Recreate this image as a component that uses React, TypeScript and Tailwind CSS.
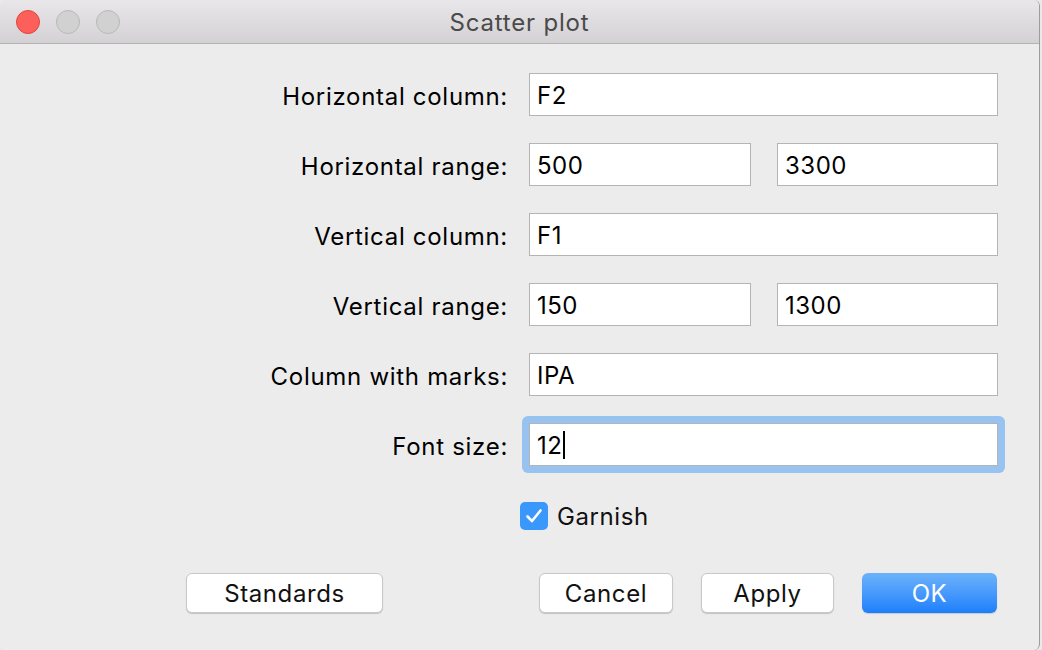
const FONT = { fontFamily: 'Inter, "Liberation Sans", sans-serif' };

function Field({ value, caret }: { value: string; caret?: boolean }) {
  return (
    <div className="flex h-[43px] w-full items-center border border-[#b4b4b4] bg-white pl-[7px] pt-[3px] text-[24px] tracking-[0.5px] text-black">
      {value}
      {caret && <span className="ml-[1px] -mt-[3px] inline-block h-[28px] w-[2px] bg-black" />}
    </div>
  );
}

function Label({ text }: { text: string }) {
  return (
    <div className="flex h-[43px] items-center justify-end pt-[4px] text-[24px] tracking-[0.7px] text-black">
      {text}
    </div>
  );
}

function Btn({ text, w, primary }: { text: string; w: string; primary?: boolean }) {
  if (primary) {
    return (
      <button
        className={`${w} flex h-[40px] items-center justify-center rounded-[6px] bg-gradient-to-b from-[#6cb2fb] to-[#1a7ffb] pt-[2px] text-[24px] tracking-[0.6px] text-white shadow-[0_1px_1px_rgba(0,0,0,0.15)]`}
      >
        {text}
      </button>
    );
  }
  return (
    <button
      className={`${w} flex h-[40px] items-center justify-center rounded-[6px] border border-[#c8c8c8] bg-white pt-[2px] text-[24px] tracking-[0.6px] text-[#111] shadow-[0_1px_1px_rgba(0,0,0,0.18)]`}
    >
      {text}
    </button>
  );
}

export default function App() {
  return (
    <div className="h-[650px] w-[1042px] bg-[#e9e9e9]" style={FONT}>
      <div className="h-[650px] w-[1040px] overflow-hidden rounded-[6px] border-r border-[#9d9d9d] bg-[#ececec]">
        <div className="relative flex h-[44px] items-center justify-center border-b border-[#b3b3b3] bg-gradient-to-b from-[#e9e7e9] to-[#d3d1d3]">
          <div className="absolute left-[16px] top-[10px] flex gap-[16px]">
            <span className="h-[24px] w-[24px] rounded-full border border-[#e0443e] bg-[#fd605b]" />
            <span className="h-[24px] w-[24px] rounded-full border border-[#b9b9b9] bg-[#d1d1d1]" />
            <span className="h-[24px] w-[24px] rounded-full border border-[#b9b9b9] bg-[#d1d1d1]" />
          </div>
          <span className="pt-[3px] text-[24px] tracking-[0.8px] text-[#4a4a4a]">Scatter plot</span>
        </div>

        <div className="pt-[29px]">
          <div className="grid grid-cols-[508px_469px] gap-x-[21px] gap-y-[27px]">
            <Label text="Horizontal column:" />
            <Field value="F2" />

            <Label text="Horizontal range:" />
            <div className="flex justify-between">
              <div className="w-[222px]"><Field value="500" /></div>
              <div className="w-[221px]"><Field value="3300" /></div>
            </div>

            <Label text="Vertical column:" />
            <Field value="F1" />

            <Label text="Vertical range:" />
            <div className="flex justify-between">
              <div className="w-[222px]"><Field value="150" /></div>
              <div className="w-[221px]"><Field value="1300" /></div>
            </div>

            <Label text="Column with marks:" />
            <Field value="IPA" />

            <Label text="Font size:" />
            <div className="-m-[7px] rounded-[6px] bg-[#98c2ef] p-[7px]">
              <Field value="12" caret />
            </div>
          </div>

          <div className="mt-[36px] flex h-[28px] items-center pl-[520px]">
            <span className="flex h-[28px] w-[28px] items-center justify-center rounded-[5px] bg-[#3a98fc]">
              <svg width="18" height="16" viewBox="0 0 18 16" fill="none">
                <path d="M2.5 8.5 L7 13 L15.5 2.5" stroke="white" strokeWidth="2.6" strokeLinecap="round" strokeLinejoin="round" />
              </svg>
            </span>
            <span className="ml-[9px] pt-[2px] text-[24px] tracking-[0.6px] text-[#111]">Garnish</span>
          </div>

          <div className="mt-[43px] flex items-center justify-between pl-[186px] pr-[42px]">
            <Btn text="Standards" w="w-[197px]" />
            <div className="flex gap-[28px]">
              <Btn text="Cancel" w="w-[134px]" />
              <Btn text="Apply" w="w-[133px]" />
              <Btn text="OK" w="w-[135px]" primary />
            </div>
          </div>
        </div>
      </div>
    </div>
  );
}
